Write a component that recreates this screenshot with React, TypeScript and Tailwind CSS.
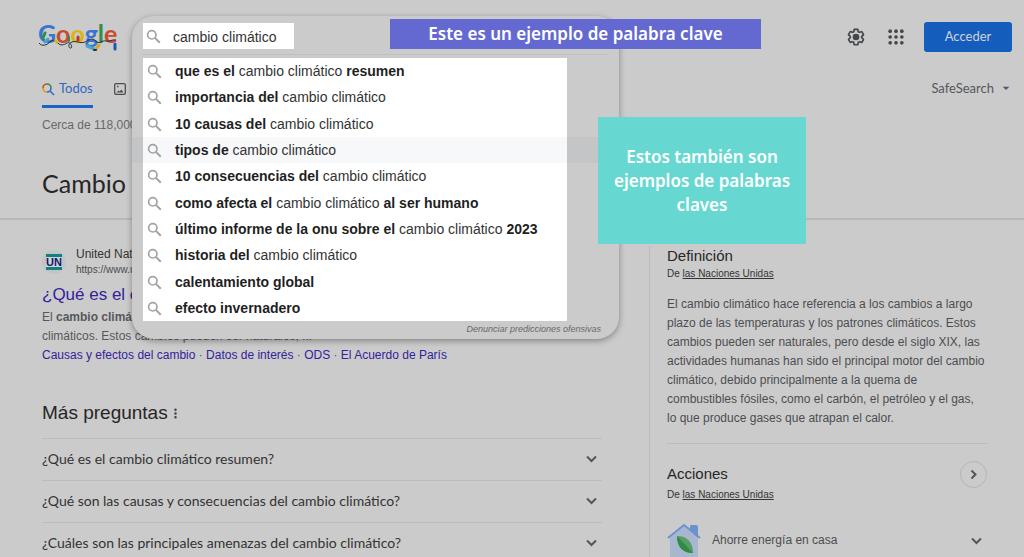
import { useState } from "react";
import { MdArrowDropDown, MdMoreVert } from "react-icons/md";

const ARIAL = "font-['Liberation_Sans',Arial,sans-serif]";
const BRAND = "font-[Lato,sans-serif]";

interface Part {
  text: string;
  bold?: boolean;
}

const QUERY: Part = { text: "cambio climático" };

const SUGGESTIONS: Part[][] = [
  [{ text: "que es el ", bold: true }, QUERY, { text: " resumen", bold: true }],
  [{ text: "importancia del ", bold: true }, QUERY],
  [{ text: "10 causas del ", bold: true }, QUERY],
  [{ text: "tipos de ", bold: true }, QUERY],
  [{ text: "10 consecuencias del ", bold: true }, QUERY],
  [{ text: "como afecta el ", bold: true }, QUERY, { text: " al ser humano", bold: true }],
  [{ text: "último informe de la onu sobre el ", bold: true }, QUERY, { text: " 2023", bold: true }],
  [{ text: "historia del ", bold: true }, QUERY],
  [{ text: "calentamiento global", bold: true }],
  [{ text: "efecto invernadero", bold: true }],
];

const QUESTIONS = [
  "¿Qué es el cambio climático resumen?",
  "¿Qué son las causas y consecuencias del cambio climático?",
  "¿Cuáles son las principales amenazas del cambio climático?",
];

const SITELINKS = ["Causas y efectos del cambio", "Datos de interés", "ODS", "El Acuerdo de París"];

function Logo() {
  return (
    <svg width="84" height="40" viewBox="0 0 84 40" role="img" aria-label="Google">
      <text x="0" y="26" fontFamily="Lato, sans-serif" fontSize="25" fontWeight="700">
        <tspan fill="#3a74d0">G</tspan>
        <tspan fill="#cb4a2c">o</tspan>
        <tspan fill="#dcb510">o</tspan>
        <tspan fill="#3a74d0">g</tspan>
        <tspan fill="#2f8f4a">l</tspan>
        <tspan fill="#cb4a2c">e</tspan>
      </text>
      {/* string of lights */}
      <path
        d="M1 26c3 4 8 2 11-1s6-2 8 1 6 2 9 0 6 4 4 5-4-4 1-6 9 3 15-1 7-1 10 1 5-2 9-1 6-2 10-1"
        fill="none"
        stroke="#23303c"
        strokeWidth="1"
      />
      <path d="M7 16l-2 5" stroke="#2f8f4a" strokeWidth="3" strokeLinecap="round" />
      <path d="M10 22l-3 3" stroke="#3fa9cf" strokeWidth="3" strokeLinecap="round" />
      <path d="M17 23l2 3" stroke="#dcb510" strokeWidth="2" strokeLinecap="round" />
      <path d="M31 20v4" stroke="#2f8f4a" strokeWidth="2" strokeLinecap="round" />
      <path d="M40 20v3" stroke="#b5382a" strokeWidth="3" strokeLinecap="round" />
      <path d="M49 29l7 3" stroke="#3fa9cf" strokeWidth="3" strokeLinecap="round" />
      <path d="M58 32l3-4" stroke="#e0a32a" strokeWidth="3" strokeLinecap="round" />
      <path d="M56 33h2" stroke="#23303c" strokeWidth="2" strokeLinecap="round" />
      <path d="M77 27v5" stroke="#1f55b5" strokeWidth="3" strokeLinecap="round" />
    </svg>
  );
}

function SearchIcon() {
  return (
    <svg width="17" height="17" viewBox="0 0 17 17" fill="none" stroke="#a0a3a7" strokeWidth="1.7" className="shrink-0">
      <circle cx="6.8" cy="6.8" r="4.2" />
      <path d="M9.9 9.9l4.9 4.9" strokeWidth="2" />
    </svg>
  );
}

function Chevron({ right = false }: { right?: boolean }) {
  return (
    <svg width="17" height="17" viewBox="0 0 17 17" fill="none" stroke="#54575a" strokeWidth="2">
      <path d={right ? "M6.5 4.5l4 4-4 4" : "M4 6.5l4.5 4.5L13 6.5"} />
    </svg>
  );
}

function GearIcon() {
  return (
    <svg width="20" height="20" viewBox="0 0 24 24" fill="#44474a">
      <path d="M13.85 22.25h-3.7c-.74 0-1.36-.54-1.45-1.27l-.27-1.89c-.27-.14-.53-.29-.79-.46l-1.8.72c-.7.26-1.47-.03-1.81-.65L2.2 15.53c-.35-.66-.2-1.44.36-1.88l1.53-1.19c-.01-.15-.02-.3-.02-.46 0-.15.01-.31.02-.46l-1.52-1.19c-.59-.45-.74-1.26-.37-1.88l1.85-3.19c.34-.62 1.11-.9 1.79-.63l1.81.73c.26-.17.52-.32.78-.46l.27-1.91c.09-.7.71-1.25 1.44-1.25h3.7c.74 0 1.36.54 1.45 1.27l.27 1.89c.27.14.53.29.79.46l1.8-.72c.71-.26 1.48.03 1.82.65l1.84 3.18c.36.66.2 1.44-.36 1.88l-1.52 1.19c.01.15.02.3.02.46s-.01.31-.02.46l1.52 1.19c.56.45.72 1.23.37 1.86l-1.86 3.22c-.34.62-1.11.9-1.8.63l-1.8-.72c-.26.17-.52.32-.78.46l-.27 1.91c-.1.68-.72 1.22-1.46 1.22zm-3.23-2h2.76l.37-2.55.53-.22c.44-.18.88-.44 1.34-.78l.45-.34 2.38.96 1.38-2.4-2.03-1.58.07-.56c.03-.26.06-.51.06-.78s-.03-.53-.06-.78l-.07-.56 2.03-1.58-1.39-2.4-2.39.96-.45-.35c-.42-.32-.87-.58-1.33-.77l-.52-.22-.37-2.55h-2.76l-.37 2.55-.53.21c-.44.19-.88.44-1.34.79l-.45.33-2.38-.95-1.39 2.39 2.03 1.58-.07.56a7 7 0 0 0-.06.79c0 .26.02.53.06.78l.07.56-2.03 1.58 1.38 2.4 2.39-.96.45.35c.43.33.86.58 1.33.77l.53.22.38 2.55z" />
      <circle cx="12" cy="12" r="4" />
    </svg>
  );
}

function AppsIcon() {
  return (
    <svg width="20" height="20" viewBox="0 0 24 24" fill="#44474a">
      {[5, 12, 19].map((y) =>
        [5, 12, 19].map((x) => <circle key={`${x}-${y}`} cx={x} cy={y} r="2.2" />),
      )}
    </svg>
  );
}

function TabSearchIcon() {
  return (
    <svg width="13" height="13" viewBox="0 0 13 13" fill="none" strokeWidth="1.6">
      <path d="M1 5a4 4 0 0 1 4-4" stroke="#cb4a2c" />
      <path d="M5 1a4 4 0 0 1 4 4" stroke="#2f8f4a" />
      <path d="M9 5a4 4 0 0 1-4 4" stroke="#2f6bcf" />
      <path d="M5 9a4 4 0 0 1-4-4" stroke="#dc9a10" />
      <path d="M8 8l4 4" stroke="#2f6bcf" />
    </svg>
  );
}

function ImageIcon() {
  return (
    <svg width="12" height="12" viewBox="0 0 12 12" fill="none" stroke="#4b4e51" strokeWidth="1.3">
      <rect x="0.7" y="0.7" width="10.6" height="10.6" rx="1.2" />
      <path d="M2.5 9.5l2-2 1.2 1 1.6-2 2.2 3z" fill="#4b4e51" stroke="none" />
      <path d="M3 3.5h1.5" />
    </svg>
  );
}

function UnIcon() {
  return (
    <svg width="24" height="24" viewBox="0 0 24 24" className="shrink-0">
      <circle cx="12" cy="12" r="12" fill="#c3c4c5" />
      <rect x="4" y="4" width="16" height="16" fill="#cdd2d4" />
      <rect x="4" y="4" width="16" height="3" fill="#128080" />
      <rect x="4" y="17" width="16" height="3" fill="#128080" />
      <text
        x="12"
        y="16"
        textAnchor="middle"
        fontFamily="Liberation Sans, sans-serif"
        fontSize="11"
        fontWeight="700"
        fill="#16166e"
      >
        UN
      </text>
    </svg>
  );
}

function HouseIcon() {
  return (
    <svg width="34" height="40" viewBox="0 0 34 40" className="shrink-0">
      <path d="M23 3q0-1 1-1h5q2 0 2 2v11l-8-7z" fill="#6a92cf" />
      <path d="M17 3l14 12v25H3V15z" fill="#a6b7cf" />
      <path d="M1 15L17 2l16 13" fill="none" stroke="#6a92cf" strokeWidth="2" />
      <path d="M10 13c10 0 16 6 16 17-10 0-16-6-16-17z" fill="#5a9c68" />
      <path d="M10 13c0 11 6 17 16 17z" fill="#2f8c41" />
    </svg>
  );
}

function Header() {
  return (
    <header className="flex h-[73px] items-center justify-between pr-3 pl-[38px]">
      <a href="#inicio">
        <Logo />
      </a>
      <div className="flex items-center">
        <button type="button" aria-label="Configuración" className="mr-5">
          <GearIcon />
        </button>
        <button type="button" aria-label="Aplicaciones" className="mr-[18px]">
          <AppsIcon />
        </button>
        <button
          type="button"
          className={`h-[30px] w-[88px] rounded-[3px] bg-[#155dbd] text-[13px] text-[#d0d3d8] ${BRAND}`}
        >
          Acceder
        </button>
      </div>
    </header>
  );
}

function Tabs() {
  return (
    <nav className={`flex h-[35px] items-start justify-between pr-[10px] pl-[42px] text-[13px] leading-[30px] ${BRAND}`}>
      <div className="flex gap-[21px]">
        <a
          href="#todos"
          className="flex h-[35px] items-start gap-1 border-b-[3px] border-[#1a62c8] text-[#2f67c0]"
        >
          <span className="flex h-8 items-center">
            <TabSearchIcon />
          </span>
          Todos
        </a>
        <a href="#imagenes" aria-label="Imágenes" className="flex h-8 items-center">
          <ImageIcon />
        </a>
      </div>
      <button type="button" className="flex items-center gap-1 text-[#55585b]">
        SafeSearch
        <MdArrowDropDown size={16} />
      </button>
    </nav>
  );
}

function SearchPanel() {
  const [query, setQuery] = useState(QUERY.text);
  const [active, setActive] = useState(3);

  return (
    <div
      className={`absolute top-4 left-[132px] w-[487px] rounded-[22px] bg-[#cbcbcb] shadow-[0_2px_6px_rgba(0,0,0,0.35)] ${ARIAL}`}
    >
      <form className="mx-[11px] border-b border-[#bdbfc1] pt-[7px] pb-[5px]">
        <label className="flex h-[26px] w-[151px] items-center gap-[11px] bg-white pl-[2px]">
          <SearchIcon />
          <input
            type="text"
            aria-label="Buscar"
            value={query}
            onChange={(e) => setQuery(e.target.value)}
            className="w-0 flex-1 pt-[2px] text-[14px] text-[#333] outline-none"
          />
        </label>
      </form>
      <ul className="mt-[3px] grid h-[263px] grid-rows-10 text-[14px] text-[#333]">
        {SUGGESTIONS.map((parts, i) => (
          <li
            key={i}
            onMouseEnter={() => setActive(i)}
            className={`flex pr-[52px] pl-[11px] ${i === active ? "bg-[#c3c5c7]" : ""}`}
          >
            <button
              type="button"
              className={`flex flex-1 items-center gap-[12px] pt-px pl-[3px] text-left ${
                i === active ? "bg-[#f7f8fa]" : "bg-white"
              }`}
            >
              <SearchIcon />
              <span className="whitespace-pre">
                {parts.map((p) => (
                  <span key={p.text} className={p.bold ? "font-bold text-[#1f1f1f]" : ""}>
                    {p.text}
                  </span>
                ))}
              </span>
            </button>
          </li>
        ))}
      </ul>
      <div className="flex justify-end pr-[18px] pb-[2px]">
        <a href="#denunciar" className="text-[9px] leading-4 text-[#66696c] italic">
          Denunciar predicciones ofensivas
        </a>
      </div>
    </div>
  );
}

function Result() {
  return (
    <article className={`flex flex-col ${ARIAL}`}>
      <div className="flex items-center gap-[10px]">
        <UnIcon />
        <div className="flex flex-col text-[#333]">
          <span className="text-[12px] leading-4">United Nat</span>
          <span className="text-[10px] leading-4 text-[#484b4e]">https://www.u</span>
        </div>
      </div>
      <h3 className="mt-1 text-[17px] leading-[26px] text-[#33229c]">
        <a href="#resultado">¿Qué es el c</a>
      </h3>
      <p className="text-[12px] leading-[19px] text-[#55585b]">
        El <b>cambio climá</b>
        <br />
        climáticos. Estos cambios pueden ser naturales, ...
      </p>
      <p className="text-[12px] leading-[19px] text-[#55585b]">
        {SITELINKS.map((link, i) => (
          <span key={link}>
            {i > 0 && " · "}
            <a href="#enlace" className="text-[#33229c]">
              {link}
            </a>
          </span>
        ))}
      </p>
    </article>
  );
}

function MoreQuestions() {
  return (
    <section className="mt-8">
      <h2 className={`flex items-center text-[19px] leading-8 text-[#262626] ${ARIAL}`}>
        Más preguntas
        <MdMoreVert size={15} className="text-[#44474a]" />
      </h2>
      <ul className="mt-[9px]">
        {QUESTIONS.map((q) => (
          <li key={q} className="border-t border-[#bcbcbc]">
            <button
              type="button"
              className={`flex h-[41px] w-full items-center justify-between pr-[2px] pb-[2px] text-[14px] text-[#333] ${BRAND}`}
            >
              {q}
              <Chevron />
            </button>
          </li>
        ))}
      </ul>
    </section>
  );
}

function Source() {
  return (
    <p className="text-[10px] leading-4 text-[#333]">
      De{" "}
      <a href="#onu" className="underline">
        las Naciones Unidas
      </a>
    </p>
  );
}

function Knowledge() {
  return (
    <aside className={`mt-[26px] w-[338px] shrink-0 border-l border-[#bababa] pl-[17px] ${ARIAL}`}>
      <h2 className="text-[15px] leading-5 text-[#262626]">Definición</h2>
      <Source />
      <p className="mt-[13px] pr-[2px] text-[12px] leading-[19px] text-[#4b4e51]">
        El cambio climático hace referencia a los cambios a largo plazo de las temperaturas y los patrones climáticos.
        Estos cambios pueden ser naturales, pero desde el siglo XIX, las actividades humanas han sido el principal motor
        del cambio climático, debido principalmente a la quema de combustibles fósiles, como el carbón, el petróleo y el
        gas, lo que produce gases que atrapan el calor.
      </p>
      <div className="mt-[15px] flex items-start justify-between border-t border-[#bcbcbc] pt-[17px]">
        <div>
          <h2 className="text-[15px] leading-[26px] text-[#262626]">Acciones</h2>
          <Source />
        </div>
        <button
          type="button"
          aria-label="Siguiente"
          className="flex size-[27px] items-center justify-center rounded-full border border-[#b5b5b5]"
        >
          <Chevron right />
        </button>
      </div>
      <button type="button" className="mt-5 flex w-full items-start pr-[2px] text-[12px] text-[#4b4e51]">
        <HouseIcon />
        <span className="ml-[11px] leading-[34px]">Ahorre energía en casa</span>
        <span className="ml-auto flex h-[34px] items-center">
          <Chevron />
        </span>
      </button>
    </aside>
  );
}

export default function App() {
  return (
    <div className="relative h-screen overflow-hidden bg-[#cbcbcb]">
      <Header />
      <Tabs />
      <p className={`pt-[7px] pl-[42px] text-[12px] leading-5 text-[#66696c] ${ARIAL}`}>Cerca de 118,000</p>
      <h1 className={`mt-8 pl-[42px] text-[25px] leading-8 text-[#262626] ${BRAND}`}>Cambio</h1>
      <hr className="mt-[19px] border-t-2 border-[#b8b8b8]" />

      <div className="flex justify-between pr-[37px] pl-[42px]">
        <main className="mt-[26px] mr-[47px] min-w-0 flex-1">
          <Result />
          <MoreQuestions />
        </main>
        <Knowledge />
      </div>

      <SearchPanel />
      <div className="absolute top-[19px] left-[390px] flex h-[30px] w-[371px] items-center justify-center bg-[#6469d1] font-['Noto_Sans',sans-serif] text-[17px] font-semibold text-white">
        Este es un ejemplo de palabra clave
      </div>
      <div className="absolute top-[117px] left-[598px] flex h-[127px] w-[208px] items-center justify-center bg-[#67d8d1] px-3 text-center font-['Noto_Sans',sans-serif] text-[17px] leading-6 font-semibold text-white">
        Estos también son ejemplos de palabras claves
      </div>
    </div>
  );
}
